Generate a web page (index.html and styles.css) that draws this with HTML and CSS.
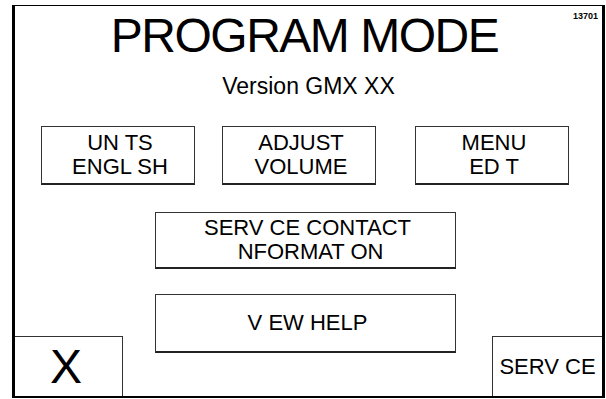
FILE: index.html
```html
<!DOCTYPE html>
<html lang="en">
<head>
    <meta charset="UTF-8">
    <meta name="viewport" content="width=device-width, initial-scale=1.0">
    <title>Program Mode</title>
    <link rel="stylesheet" href="styles.css">
</head>
<body>
    <div class="screen">
        <span class="screen-id">13701</span>

        <div class="main">
            <h1 class="title">PROGRAM MODE</h1>
            <div class="version">Version GMX XX</div>

            <div class="button-row">
                <div class="btn btn-units">UN TS<br>ENGL SH</div>
                <div class="btn btn-volume">ADJUST<br>VOLUME</div>
                <div class="btn btn-menu">MENU<br>ED T</div>
            </div>

            <div class="btn btn-wide btn-contact">SERV CE CONTACT<br> NFORMAT ON</div>
        </div>

        <div class="btn btn-wide btn-help">V EW HELP</div>

        <div class="corner corner-close">X</div>
        <div class="corner corner-service">SERV CE</div>
    </div>
</body>
</html>
```

FILE: styles.css
```css
body {
    margin: 0;
    background-color: #fff;
    color: #000;
    font-family: "Liberation Sans", Arial, sans-serif;
}

.screen {
    position: relative;
    box-sizing: border-box;
    width: 593px;
    height: 393px;
    margin: 5px 0 0 12px;
    border-style: solid;
    border-color: #000;
    border-width: 1px 3px 2px 3px;
    display: grid;
    grid-template-columns: 108px 1fr 110px;
    grid-template-rows: 288px 42px 1fr;
}

.screen-id {
    position: absolute;
    top: 5px;
    right: 4px;
    font-size: 9px;
    font-weight: bold;
}

.main {
    grid-column: 1 / 4;
    grid-row: 1;
    display: flex;
    flex-direction: column;
    align-items: center;
}

.title {
    margin: 6px 8px 0 0;
    font-size: 48px;
    line-height: 48px;
    font-weight: normal;
    letter-spacing: -1.5px;
}

.version {
    margin-top: 13px;
    font-size: 23px;
    line-height: 26px;
}

.btn {
    box-sizing: border-box;
    display: flex;
    align-items: center;
    justify-content: center;
    text-align: center;
    padding-left: 4px;
    font-size: 22px;
    line-height: 24px;
    white-space: pre;
    border: 1px solid #333;
    border-bottom: 2px solid #222;
}

.button-row {
    align-self: stretch;
    display: flex;
    margin-top: 27px;
    padding-left: 26px;
}

.button-row .btn {
    width: 154px;
    height: 59px;
}

.btn-volume {
    margin-left: 27px;
}

.btn-menu {
    margin-left: 39px;
}

.btn-wide {
    width: 301px;
    height: 57px;
}

.btn-contact {
    align-self: start;
    margin: 27px 0 0 140px;
}

.btn-help {
    grid-column: 2;
    grid-row: 2 / 4;
    align-self: start;
    justify-self: start;
    margin-left: 32px;
    height: 59px;
}

.corner {
    grid-row: 3;
    display: flex;
    align-items: center;
    justify-content: center;
    border-top: 1px solid #333;
}

.corner-close {
    grid-column: 1;
    border-right: 1px solid #333;
    font-size: 48px;
    padding-right: 5px;
}

.corner-service {
    grid-column: 3;
    border-left: 1px solid #333;
    font-size: 22px;
}
```
